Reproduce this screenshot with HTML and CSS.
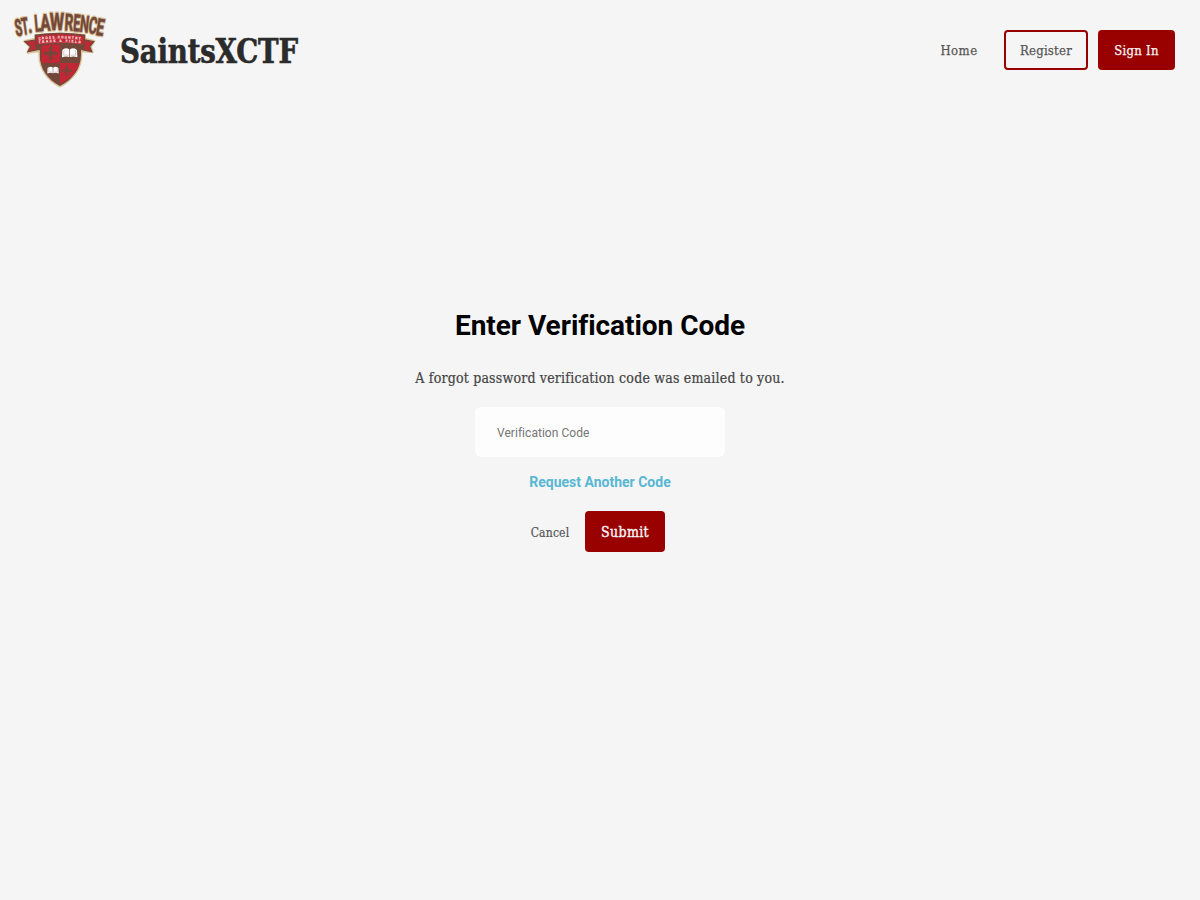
FILE: index.html
```
<!DOCTYPE html>
<html lang="en">
<head>
<meta charset="utf-8">
<title>SaintsXCTF</title>
<link rel="stylesheet" href="styles.css">
</head>
<body>
<header class="nav">
  <div class="brand">
    <svg class="logo" viewBox="0 0 360 300" role="img" aria-label="St. Lawrence Cross Country Track and Field">
      <defs>
        <g id="cross">
          <path d="M-3-14H3V-3H14V3H3V14H-3V3H-14V-3H-3Z"/>
          <path d="M0-22L8-13H-8ZM0 22L8 13H-8ZM-22 0L-13-8V8ZM22 0L13-8V8Z"/>
          <path d="M-7-7H7V7H-7Z"/>
        </g>
        <g id="book">
          <path d="M-22-9L-17-13Q-8-16-1-11V12Q-11 8-23 13ZM22-9L17-13Q8-16 1-11V12Q11 8 23 13Z" fill="#fff"/>
          <path d="M-17-9L-18 7Q-9 4-3 8M17-9L18 7Q9 4 3 8" fill="none" stroke="#a58b82" stroke-width="1.4"/>
        </g>
        <clipPath id="shield"><path d="M119 124H243V164C243 207 215 240 180 258C145 240 119 207 119 164Z"/></clipPath>
      </defs>
      <g stroke="#d9c196" stroke-width="8" stroke-linejoin="round" fill="#d9c196">
        <path d="M119 132H243V164C243 207 215 240 180 258C145 240 119 207 119 164Z"/>
        <path d="M74 124L106 117V107Q180 96 254 107V117L282 124L271 140L277 156L238 152Q180 142 122 152L84 157L90 140Z"/>
      </g>
      <g clip-path="url(#shield)">
        <path fill="#73483b" d="M110 120H250V265H110Z"/>
        <path fill="#c22735" d="M124 128H180V189H124ZM180 189H237Q230 229 180 252Z"/>
      </g>
      <g fill="#73483b">
        <use href="#cross" transform="translate(152 160)"/>
        <use href="#cross" transform="translate(200 212) scale(.76)"/>
      </g>
      <use href="#book" transform="translate(209 159)"/>
      <use href="#book" transform="translate(159 211) scale(.74)"/>
      <path fill="#c22735" stroke="#73483b" stroke-width="4" d="M75 125L112 119V149L84 155L92 140ZM281 125L248 119V149L275 155L269 140Z"/>
      <path fill="#73483b" d="M106 134L122 133V152L106 146ZM254 134L238 133V152L254 146Z"/>
      <path fill="#c22735" stroke="#73483b" stroke-width="5" d="M107 106Q180 95 253 106V136Q180 125 107 136Z"/>
      <g class="ribbon-text">
        <path id="arc1" fill="none" d="M116 119Q180 111 245 119"/>
        <path id="arc2" fill="none" d="M116 130Q180 122 245 130"/>
        <text><textPath href="#arc1" textLength="126">CROSS COUNTRY</textPath></text>
        <text><textPath href="#arc2" textLength="126">TRACK &amp; FIELD</textPath></text>
      </g>
      <use class="arch-edge" href="#arch"/>
      <g class="arch-fill">
        <g id="arch" class="arch-text">
          <text transform="translate(49 109) rotate(-9)" textLength="21" lengthAdjust="spacingAndGlyphs">S</text>
          <text transform="translate(68 104) rotate(-8)" textLength="20" lengthAdjust="spacingAndGlyphs">T</text>
          <text transform="translate(86 99) rotate(-7)" textLength="12" lengthAdjust="spacingAndGlyphs">.</text>
          <text transform="translate(106 95) rotate(-5)" textLength="19" lengthAdjust="spacingAndGlyphs">L</text>
          <text transform="translate(122 93) rotate(-3)" textLength="30" lengthAdjust="spacingAndGlyphs">A</text>
          <text transform="translate(149 91) rotate(0)" textLength="43" lengthAdjust="spacingAndGlyphs">W</text>
          <text transform="translate(193 91) rotate(3)" textLength="26" lengthAdjust="spacingAndGlyphs">R</text>
          <text transform="translate(218 93) rotate(4)" textLength="21" lengthAdjust="spacingAndGlyphs">E</text>
          <text transform="translate(238 95) rotate(6)" textLength="27" lengthAdjust="spacingAndGlyphs">N</text>
          <text transform="translate(263 99) rotate(8)" textLength="25" lengthAdjust="spacingAndGlyphs">C</text>
          <text transform="translate(286 104) rotate(9)" textLength="23" lengthAdjust="spacingAndGlyphs">E</text>
        </g>
      </g>
    </svg>
    <h1 class="name">SaintsXCTF</h1>
  </div>
  <nav class="links">
    <a class="link home">Home</a>
    <a class="link register">Register</a>
    <a class="link signin">Sign In</a>
  </nav>
</header>
<main class="form">
  <h2 class="title">Enter Verification Code</h2>
  <p class="info">A forgot password verification code was emailed to you.</p>
  <input class="code" type="text" placeholder="Verification Code">
  <a class="again">Request Another Code</a>
  <div class="actions">
    <button class="cancel">Cancel</button>
    <button class="submit">Submit</button>
  </div>
</main>
</body>
</html>
```
FILE: styles.css
```
* { box-sizing: border-box; }
body { margin: 0; min-height: 900px; background: #f5f5f5; font-family: "Roboto Slab", "DejaVu Serif Condensed", "DejaVu Serif", serif; }
.nav { display: flex; justify-content: space-between; align-items: center; height: 100px; padding-right: 25px; }
.brand { display: flex; align-items: center; }
.logo { width: 120px; height: 100px; }
.arch-text { font-family: Roboto, sans-serif; font-weight: 700; font-size: 70px; stroke-linejoin: round; }
.arch-edge { fill: #d9c196; stroke: #d9c196; stroke-width: 9px; }
.arch-fill { fill: #73483b; stroke: #73483b; stroke-width: 1.5px; }
.ribbon-text { font-family: Roboto, sans-serif; font-weight: 700; font-size: 10px; fill: #f3dcd8; stroke: #f3dcd8; stroke-width: .5px; }
.name { margin: 4px 0 0; font-size: 33px; line-height: 44px; font-weight: 700; letter-spacing: -.2px; color: #2b2b2b; -webkit-text-stroke: .6px #2b2b2b; white-space: nowrap; transform: scaleX(.93); transform-origin: left; }
.links { display: flex; align-items: center; font-size: 13px; letter-spacing: .25px; font-weight: 500; color: #555; -webkit-text-stroke: .25px; }
.link { display: flex; align-items: center; justify-content: center; height: 40px; white-space: nowrap; }
.home { width: 38px; margin-right: 26px; letter-spacing: .5px; }
.register { width: 84px; margin-right: 10px; border: 2px solid #900; border-radius: 4px; }
.signin { width: 77px; border-radius: 4px; background: #900; color: #f5f5f5; }
.form { display: flex; flex-direction: column; align-items: center; padding-top: 206px; }
.title { margin: 0; font: 700 28px/40px Roboto, sans-serif; font-variant-ligatures: none; letter-spacing: -.05px; color: #000; }
.info { margin: 22px 0 0; font-size: 14px; line-height: 20px; letter-spacing: .2px; color: #444; -webkit-text-stroke: .2px; white-space: nowrap; }
.code { width: 250px; height: 50px; margin-top: 19px; padding: 2px 22px 0; border: 0; border-radius: 6px; background: #fdfdfd; font: 400 12px Roboto, sans-serif; font-variant-ligatures: none; letter-spacing: .04px; }
.code::placeholder { color: #757575; }
.again { margin-top: 15px; font: 700 14px/20px Roboto, sans-serif; color: #58b7d3; }
.actions { display: flex; align-items: center; margin-top: 19px; padding-right: 5px; gap: 15px; }
.actions button { border: 0; padding: 0; font-family: inherit; white-space: nowrap; }
.actions .cancel { width: 40px; padding-top: 2px; background: none; font-size: 12px; letter-spacing: .2px; color: #555; -webkit-text-stroke: .2px; }
.submit { width: 80px; height: 41px; border-radius: 4px; background: #900; color: #f5f5f5; font-size: 14px; letter-spacing: .35px; -webkit-text-stroke: .35px; }
```
